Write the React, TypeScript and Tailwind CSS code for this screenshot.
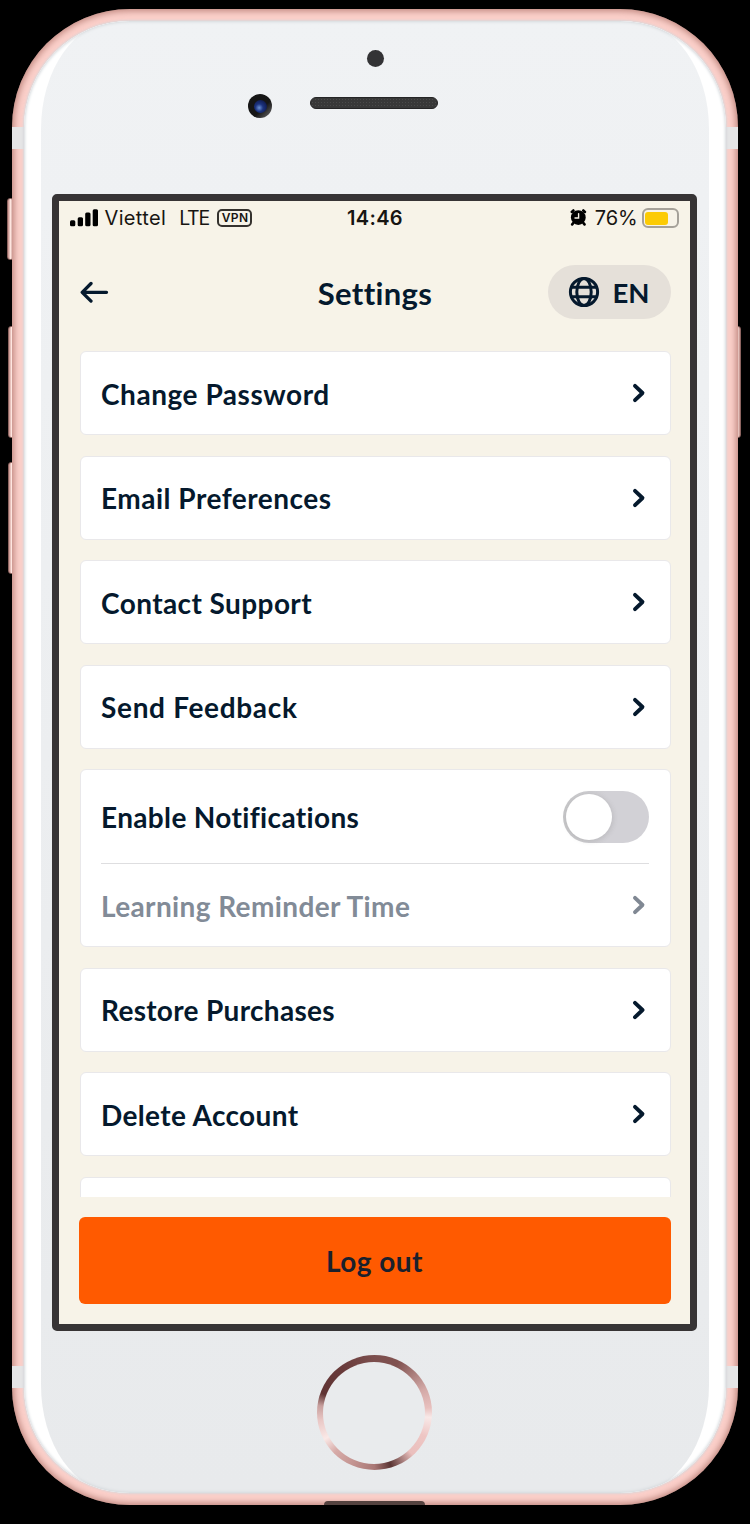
import React from "react";

const Chevron = ({ className = "text-[#05192d]" }: { className?: string }) => (
  <svg className={`h-5 w-[14px] ${className}`} viewBox="0 0 14 20" fill="none" stroke="currentColor" strokeWidth="3.9" strokeLinecap="round" strokeLinejoin="round">
    <path d="M3 2.8 10.5 10 3 17.2" />
  </svg>
);

const items: { label: string; spacing: string }[] = [
  { label: "Change Password", spacing: "tracking-[0.54px]" },
  { label: "Email Preferences", spacing: "tracking-[0.5px]" },
  { label: "Contact Support", spacing: "tracking-[0.41px]" },
  { label: "Send Feedback", spacing: "tracking-[0.68px]" },
];

const lowerItems: { label: string; spacing: string }[] = [
  { label: "Restore Purchases", spacing: "tracking-[0.31px]" },
  { label: "Delete Account", spacing: "tracking-[0.36px]" },
];

const Card = ({ label, spacing }: { label: string; spacing: string }) => (
  <div className="flex h-[84px] shrink-0 items-center justify-between rounded-[6px] border-[1.5px] border-[#e9e8ea] bg-white pr-[23.5px] pl-[20.5px]">
    <span className={`pt-px ${spacing}`}>{label}</span>
    <Chevron />
  </div>
);

const StatusBar = () => (
  <div className="grid h-[34px] shrink-0 grid-cols-[1fr_auto_1fr] items-center pr-[11px] pl-[11px] font-['Inter',sans-serif] text-[20px] font-normal text-[#171512]">
    <div className="flex items-center">
      <svg className="h-[19px] w-[29px]" viewBox="0 0 29 19" fill="#000">
        <rect x="0" y="11.2" width="5.3" height="6" rx="1.5" />
        <rect x="7.7" y="8.2" width="5.3" height="9" rx="1.5" />
        <rect x="15.2" y="3.5" width="5.3" height="13.7" rx="1.5" />
        <rect x="22.7" y="0.3" width="5.3" height="17" rx="1.5" />
      </svg>
      <span className="ml-[6px] tracking-[0.35px]">Viettel</span>
      <span className="ml-[13px] pt-px text-[19.5px] tracking-[-1.2px]">LTE</span>
      <span className="ml-[8px] flex h-[18px] w-[35px] items-center justify-center rounded-[5px] border-2 border-[#35322e] pl-px text-[12px] font-semibold tracking-[0.4px]">VPN</span>
    </div>
    <span className="pl-[2px] font-semibold tracking-[0.3px]">14:46</span>
    <div className="flex items-center justify-end">
      <svg className="h-[18px] w-[17px]" viewBox="0 0 17 18" fill="none" stroke="#000" strokeLinecap="round">
        <circle cx="8.3" cy="8.6" r="7.4" fill="#000" stroke="none" />
        <path d="M1.8 2.9 3.4 1.5M14.9 2.9 13.3 1.5M3.2 14.2 2.2 15.4M13.5 14.2l1 1.2" strokeWidth="2.6" />
        <path d="M8.6 4.6V9H5" stroke="#f7f2e7" strokeWidth="1.4" />
      </svg>
      <span className="ml-[8px] tracking-[-0.1px]">76%</span>
      <span className="ml-[4px] flex h-[20px] w-[37px] items-center rounded-[6px] border-2 border-[#a5a199] pl-[1.5px]">
        <span className="h-[13px] w-[23px] rounded-[3px] bg-[#fccb04]" />
      </span>
    </div>
  </div>
);

const Header = () => (
  <div className="mt-[30px] grid h-[54px] shrink-0 grid-cols-[1fr_auto_1fr] items-center pr-[19px] pl-[21px]">
    <svg className="h-[24px] w-[29px]" viewBox="0 0 29 24" fill="none" stroke="#05192d" strokeWidth="3.3" strokeLinecap="round" strokeLinejoin="round">
      <path d="M26.5 12.3H2.5M11 3.5 2.2 12.3 11 21.1" />
    </svg>
    <h1 className="pt-[2px] text-[31px] tracking-[0.35px]">Settings</h1>
    <div className="flex h-[54px] w-[123px] items-center justify-self-end rounded-full bg-[#e5e0d9] pl-[20px]">
      <svg className="h-[32px] w-[32px]" viewBox="0 0 32 32" fill="none" stroke="#05192d" strokeWidth="3">
        <circle cx="16" cy="16" r="13.6" />
        <ellipse cx="16" cy="16" rx="7.2" ry="13.6" />
        <path d="M3.8 11.2H28.2M3.8 20.8H28.2" />
      </svg>
      <span className="ml-[13px] pt-px text-[27.5px]">EN</span>
    </div>
  </div>
);

const Screen = () => (
  <div className="mt-[173px] flex h-[1137px] w-[645px] shrink-0 -translate-x-px flex-col overflow-hidden rounded-[5px] border-[7px] border-[#373435] bg-[#f7f3e8] font-['Lato',sans-serif] text-[28px] font-bold text-[#05192d]">
    <StatusBar />
    <Header />
    <div className="mt-[32px] flex h-[846px] shrink-0 flex-col gap-[20.5px] overflow-hidden pr-[19px] pl-[21px]">
      {items.map((item) => (
        <Card key={item.label} {...item} />
      ))}
      <div className="h-[178px] shrink-0 rounded-[6px] border-[1.5px] border-[#e9e8ea] bg-white px-[20.5px]">
        <div className="flex h-[94px] items-center justify-between border-b-[1.5px] border-[#dedee0]">
          <span className="tracking-[0.35px]">Enable Notifications</span>
          <div className="flex h-[52px] w-[86px] items-center rounded-full bg-[linear-gradient(to_right,#c6c6c8,#d2d1d6_50%)] pl-[3px]">
            <span className="size-[46px] rounded-full bg-white shadow-[1px_1px_4px_1px_rgba(100,100,100,0.15)]" />
          </div>
        </div>
        <div className="flex h-[82px] items-center justify-between pr-[3px] text-[#828b97]">
          <span className="pt-px tracking-[0.38px]">Learning Reminder Time</span>
          <Chevron className="text-[#808893]" />
        </div>
      </div>
      {lowerItems.map((item) => (
        <Card key={item.label} {...item} />
      ))}
      <div className="h-[84px] shrink-0 rounded-[6px] border-[1.5px] border-[#e9e8ea] bg-white" />
    </div>
    <button className="mr-[19px] ml-[20px] mt-[20px] h-[87px] shrink-0 rounded-[6px] bg-[#ff5a00] pt-px tracking-[0.46px] text-[#1a202c]">Log out</button>
  </div>
);

const HomeButton = () => (
  <div className="mt-[24px] flex size-[115px] shrink-0 -translate-x-px items-center justify-center rounded-full bg-[conic-gradient(from_0deg,#7c4f4e_0deg,#80514f_25deg,#d3a9a7_65deg,#e8c0be_85deg,#f8e9e8_95deg,#eec6c4_115deg,#eabfbd_138deg,#5b3534_163deg,#a97775_180deg,#c59693_205deg,#d6aaa7_225deg,#fae9e7_242deg,#e9c7c5_262deg,#c8a09e_277deg,#5f3333_290deg,#693b3b_325deg,#7c4f4e_360deg)]">
    <div className="size-[102px] rounded-full bg-[#e9ebed]" />
  </div>
);

const SideButton = ({ className }: { className: string }) => (
  <div className={`absolute w-[7px] rounded-[3px] border border-[#8c6460] bg-linear-to-r from-[#c48e88] via-[#ffe6e0] to-[#bd8c86] ${className}`} />
);

const Band = ({ className }: { className: string }) => (
  <div className={`absolute h-[22px] w-[13px] bg-[#e5e5e6] ${className}`} />
);

export default function App() {
  return (
    <div className="h-[1524px] w-[750px] overflow-hidden bg-black px-[12px] pt-[9px]">
      <div className="relative h-[1496px] w-[726px]">
        <SideButton className="top-[189px] -left-[5px] h-[62px]" />
        <SideButton className="top-[317px] -left-[4px] h-[112px]" />
        <SideButton className="top-[453px] -left-[4px] h-[112px]" />
        <SideButton className="top-[317px] -right-[3px] h-[112px]" />
        <div className="relative flex h-full w-full overflow-hidden rounded-[118px] bg-[#fbd0ca] p-[12px] shadow-[inset_0_0_6px_2px_rgba(150,85,75,0.6)]">
          <Band className="top-[118px] left-0" />
          <Band className="top-[118px] right-0" />
          <Band className="bottom-[117px] left-0" />
          <Band className="bottom-[117px] right-0" />
          <div className="relative flex h-full w-full justify-center overflow-hidden rounded-[106px] bg-white px-[17px] shadow-[0_0_2px_1px_rgba(215,215,218,0.9)]">
            <div className="flex h-full w-full flex-col items-center rounded-[76px/108px] bg-linear-to-b from-[#f0f2f4] to-[#e8eaec]">
              <div className="relative mt-0 w-full">
                <div className="absolute top-[29px] left-[326px] size-[17px] rounded-full bg-[#333335]" />
                <div className="absolute top-[73px] left-[207px] flex size-[24px] items-center justify-center rounded-full bg-linear-to-br from-[#161616] from-60% to-[#77777a]">
                  <div className="size-[13px] rounded-full bg-[radial-gradient(circle_at_40%_60%,#6c92d4_0%,#1c3380_35%,#101b4e_75%,#1d2540_100%)]" />
                </div>
                <div className="absolute top-[76px] left-[269px] h-[12px] w-[128px] rounded-full border-[1.5px] border-[#252526] bg-[#383838] bg-[radial-gradient(#4a4a4a_0.7px,transparent_0.8px)] bg-size-[3px_3px]" />
              </div>
              <Screen />
              <HomeButton />
            </div>
            <div className="pointer-events-none absolute inset-0 rounded-[106px] shadow-[inset_0_0_3px_1px_#d5d9dc]" />
          </div>
          <div className="absolute bottom-0 left-[312px] h-[4px] w-[101px] rounded-t-[4px] bg-[#554340]" />
        </div>
      </div>
    </div>
  );
}
